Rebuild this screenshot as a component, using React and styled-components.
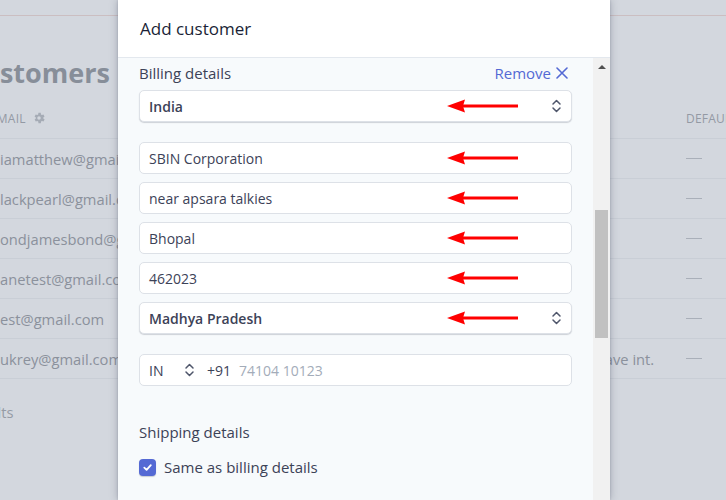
import React from "react";
import styled, { createGlobalStyle } from "styled-components";

const Global = createGlobalStyle`
  html, body { margin: 0; padding: 0; }
  body { font-family: "Open Sans", "Noto Sans", "Liberation Sans", sans-serif; }
  * { box-sizing: border-box; }
`;

const Screen = styled.div`
  position: relative;
  width: 726px;
  height: 500px;
  overflow: hidden;
  background: #d3d7de;
`;

const Page = styled.div`
  display: flex;
  flex-direction: column;
  color: #8b919c;
`;

const TopBar = styled.div`
  height: 16px;
  border-bottom: 1px solid #cbbec1;
`;

const Heading = styled.h1`
  margin: 39px 0 7px -35px;
  font-size: 27px;
  line-height: 36px;
  font-weight: 700;
  color: #878e99;
  white-space: nowrap;
`;

const Row = styled.div`
  display: grid;
  grid-template-columns: 600px 95px 1fr;
  align-items: center;
  margin-left: -9px;
  height: ${(p) => (p.$head ? 41 : 40)}px;
  border-bottom: 1px solid #c9ced6;
  font-size: ${(p) => (p.$head ? 12 : 14.7)}px;
  white-space: nowrap;
  overflow: hidden;
`;

const HeadCell = styled.span`
  display: inline-flex;
  align-items: center;
  gap: 6px;
  letter-spacing: 0.2px;
  color: #9399a4;
  margin-left: ${(p) => p.$ml || 0}px;
`;

const Cell = styled.span`
  overflow: hidden;
  color: #8b919c;
`;

const Dash = styled.span`
  display: block;
  width: 16px;
  height: 1px;
  background: #a9afb9;
`;

const Footer = styled.div`
  margin: 23px 0 0 -45px;
  font-size: 14.7px;
  line-height: 20px;
  color: #959ba5;
  white-space: nowrap;
`;

const Modal = styled.div`
  position: absolute;
  left: 118px;
  top: 0;
  width: 492px;
  height: 500px;
  display: flex;
  flex-direction: column;
  background: #f7fafc;
  box-shadow: 0 0 8px rgba(60, 66, 87, 0.35), 0 0 2px rgba(60, 66, 87, 0.2);
`;

const ModalHeader = styled.div`
  height: 58px;
  flex: none;
  display: flex;
  align-items: center;
  padding: 0 22px;
  background: #fff;
  border-bottom: 1px solid #e3e8ee;
`;

const Title = styled.h2`
  margin: 0;
  font-size: 17px;
  font-weight: 500;
  color: #1a1f36;
`;

const ModalBody = styled.div`
  flex: 1;
  display: flex;
  min-height: 0;
`;

const Content = styled.div`
  flex: 1;
  padding: 5px 21px 0 21px;
  display: flex;
  flex-direction: column;
`;

const SectionHead = styled.div`
  display: flex;
  justify-content: space-between;
  align-items: center;
  height: 20px;
  margin-top: ${(p) => p.$mt || 0}px;
`;

const SectionLabel = styled.span`
  font-size: 15px;
  font-weight: 500;
  color: #3c4257;
`;

const RemoveLink = styled.span`
  display: inline-flex;
  align-items: center;
  gap: 5px;
  padding-right: 4px;
  font-size: 15px;
  color: #5469d4;
`;

const Stack = styled.div`
  display: flex;
  flex-direction: column;
  gap: 8px;
  margin-top: ${(p) => p.$mt}px;
`;

const Field = styled.div`
  position: relative;
  height: 32px;
  display: flex;
  align-items: center;
  padding: 0 9px;
  background: #fff;
  border: 1px solid #dde1e7;
  border-radius: 5px;
  box-shadow: ${(p) =>
    p.$select ? "0 1px 1px rgba(60, 66, 87, 0.22)" : "none"};
  font-size: 14px;
  font-weight: ${(p) => (p.$select ? 600 : 400)};
  color: #3c4257;
`;

const FieldText = styled.span`
  flex: 1;
`;

const Arrow = styled.svg`
  position: absolute;
  left: 307px;
  top: 50%;
  margin-top: -7px;
`;

const Chevrons = styled.svg`
  flex: none;
  color: #4f566b;
`;

const PhoneCountry = styled.span`
  width: 35px;
`;

const PhoneCode = styled.span`
  margin-left: 12px;
`;

const Placeholder = styled.span`
  margin-left: 8px;
  color: #a3acb9;
`;

const CheckRow = styled.label`
  display: flex;
  align-items: center;
  gap: 8px;
  height: 20px;
  margin-top: 15px;
  font-size: 15px;
  color: #3c4257;
`;

const CheckBox = styled.span`
  width: 17px;
  height: 17px;
  border-radius: 4px;
  background: #5469d4;
  display: flex;
  align-items: center;
  justify-content: center;
  box-shadow: 0 1px 1px rgba(60, 66, 87, 0.25);
`;

const Scrollbar = styled.div`
  width: 17px;
  flex: none;
  background: #f1f1f1;
  display: flex;
  flex-direction: column;
  align-items: center;
`;

const ScrollArrow = styled.div`
  margin-top: 7px;
  width: 0;
  height: 0;
  border-left: 4px solid transparent;
  border-right: 4px solid transparent;
  border-bottom: 4px solid #505050;
`;

const Thumb = styled.div`
  margin-top: 141px;
  width: 13px;
  height: 128px;
  background: #c1c1c1;
`;

const RedArrow = () => (
  <Arrow width="72" height="14" viewBox="0 0 72 14">
    <path d="M0 7 L18 0.5 L16 7 L18 13.5 Z" fill="#ff0000" />
    <rect x="15" y="5.5" width="56" height="3" fill="#ff0000" />
  </Arrow>
);

const UpDown = () => (
  <Chevrons width="11" height="16" viewBox="0 0 11 16" fill="none">
    <path
      d="M2 6 L5.5 2.5 L9 6 M2 10 L5.5 13.5 L9 10"
      stroke="currentColor"
      strokeWidth="1.5"
      strokeLinecap="round"
      strokeLinejoin="round"
    />
  </Chevrons>
);

const Gear = () => (
  <svg width="14" height="14" viewBox="0 0 24 24" fill="#a5abb5">
    <path d="M19.4 13a7.5 7.5 0 0 0 0-2l2.1-1.6-2-3.5-2.5 1a7.6 7.6 0 0 0-1.7-1L15 3.2h-4l-.4 2.7a7.6 7.6 0 0 0-1.7 1l-2.5-1-2 3.5L6.6 11a7.5 7.5 0 0 0 0 2l-2.1 1.6 2 3.5 2.5-1a7.6 7.6 0 0 0 1.7 1l.4 2.7h4l.4-2.7a7.6 7.6 0 0 0 1.7-1l2.5 1 2-3.5L19.4 13zM12 15a3 3 0 1 1 0-6 3 3 0 0 1 0 6z" />
  </svg>
);

const rows = [
  { email: "iamatthew@gmail.com", desc: "" },
  { email: "lackpearl@gmail.com", desc: "" },
  { email: "ondjamesbond@gmail.com", desc: "" },
  { email: "anetest@gmail.com", desc: "" },
  { email: "est@gmail.com", desc: "" },
  { email: "ukrey@gmail.com", desc: "Have int." },
];

const EmailCell = styled(Cell)`
  margin-left: 9px;
`;

const DescCell = styled(Cell)`
  margin-left: 3px;
`;

export default function App() {
  return (
    <>
      <Global />
      <Screen>
        <Page>
          <TopBar />
          <Heading>Customers</Heading>
          <Row $head>
            <HeadCell $ml={-1}>
              EMAIL <Gear />
            </HeadCell>
            <span />
            <HeadCell>DEFAULT</HeadCell>
          </Row>
          {rows.map((r) => (
            <Row key={r.email}>
              <EmailCell>{r.email}</EmailCell>
              <DescCell>{r.desc}</DescCell>
              <Dash />
            </Row>
          ))}
          <Footer>6 results</Footer>
        </Page>

        <Modal>
          <ModalHeader>
            <Title>Add customer</Title>
          </ModalHeader>
          <ModalBody>
            <Content>
              <SectionHead>
                <SectionLabel>Billing details</SectionLabel>
                <RemoveLink>
                  Remove
                  <svg width="12" height="12" viewBox="0 0 12 12">
                    <path
                      d="M1 1 L11 11 M11 1 L1 11"
                      stroke="#5469d4"
                      strokeWidth="1.6"
                      strokeLinecap="round"
                    />
                  </svg>
                </RemoveLink>
              </SectionHead>
              <Stack $mt={7}>
                <Field $select>
                  <FieldText>India</FieldText>
                  <UpDown />
                  <RedArrow />
                </Field>
              </Stack>
              <Stack $mt={20}>
                <Field>
                  <FieldText>SBIN Corporation</FieldText>
                  <RedArrow />
                </Field>
                <Field>
                  <FieldText>near apsara talkies</FieldText>
                  <RedArrow />
                </Field>
                <Field>
                  <FieldText>Bhopal</FieldText>
                  <RedArrow />
                </Field>
                <Field>
                  <FieldText>462023</FieldText>
                  <RedArrow />
                </Field>
                <Field $select>
                  <FieldText>Madhya Pradesh</FieldText>
                  <UpDown />
                  <RedArrow />
                </Field>
              </Stack>
              <Stack $mt={20}>
                <Field>
                  <PhoneCountry>IN</PhoneCountry>
                  <UpDown />
                  <PhoneCode>+91</PhoneCode>
                  <Placeholder>74104 10123</Placeholder>
                </Field>
              </Stack>
              <SectionHead $mt={36}>
                <SectionLabel>Shipping details</SectionLabel>
              </SectionHead>
              <CheckRow>
                <CheckBox>
                  <svg width="11" height="11" viewBox="0 0 12 12">
                    <path
                      d="M2.5 6.2 L5 8.6 L9.6 3.4"
                      stroke="#fff"
                      strokeWidth="2"
                      fill="none"
                      strokeLinecap="round"
                      strokeLinejoin="round"
                    />
                  </svg>
                </CheckBox>
                Same as billing details
              </CheckRow>
            </Content>
            <Scrollbar>
              <ScrollArrow />
              <Thumb />
            </Scrollbar>
          </ModalBody>
        </Modal>
      </Screen>
    </>
  );
}
